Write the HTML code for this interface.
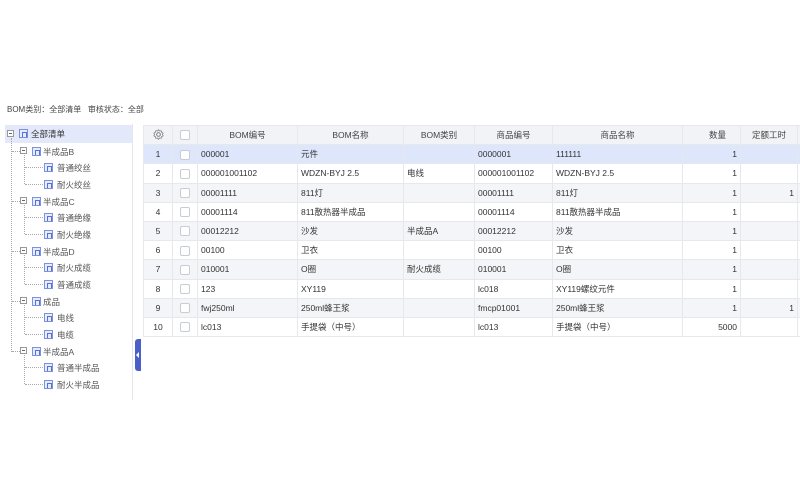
<!DOCTYPE html>
<html><head><meta charset="utf-8"><style>
*{margin:0;padding:0;box-sizing:border-box}
body{width:800px;height:500px;background:#fff;font-family:"Liberation Sans","Noto Sans CJK SC",sans-serif;font-size:8px;color:#333;position:relative;overflow:hidden}
.top{position:absolute;left:7px;top:104px;font-size:8px;color:#444}
.left{position:absolute;left:4px;top:124px;width:129px;height:276px;border-right:1px solid #e4e6ea}
.sel{position:absolute;left:1px;top:1px;width:127px;height:18px;background:#e3e9fa}
.n{position:absolute;height:12px;line-height:12px;font-size:8.5px;color:#555;white-space:nowrap}
.tg{position:absolute;width:7px;height:7px;border:1px solid #999;background:#fff}
.tg:after{content:"";position:absolute;left:1px;top:2px;width:3px;height:1px;background:#666}
.ic{position:absolute;width:9px;height:9px;border:1px solid #7c92e0;background:#e6ecfc}
.ic:after{content:"";position:absolute;left:2px;top:2px;width:3px;height:4px;border:1px solid #5570d8;border-bottom:none}
.vl{position:absolute;border-left:1px dotted #aaa}
.hl{position:absolute;border-top:1px dotted #aaa;width:6px}
#wrap{position:absolute;left:143px;top:125px;width:657px;height:260px;overflow:hidden}
table{width:677px;border-collapse:collapse;table-layout:fixed}
td,th{height:19.2px;border:1px solid #e6e8ec;font-weight:normal;font-size:8.5px;white-space:nowrap;overflow:hidden;padding:0 3px}
th{background:#f2f3f6;color:#444;text-align:center}
tr:nth-child(even) td{background:#f4f5f8}
tr.a td{background:#dde6fb!important}
td.c{text-align:center}td.r{text-align:right}
.cb{display:inline-block;width:10px;height:10px;border:1px solid #c8ccd4;border-radius:2px;background:#fff;vertical-align:middle}
.h{position:absolute;left:135px;top:339px;width:6px;height:32px;background:#4a5fc8;border-radius:3px 0 0 3px}
.h:after{content:"";position:absolute;left:1px;top:13px;border:3px solid transparent;border-right:3px solid #fff;border-left:0}
</style></head><body>
<div class="top">BOM类别：全部清单 &nbsp;&nbsp;审核状态：全部</div>
<div class="left"><div class="sel"></div>
<div class="vl" style="left:7px;top:14px;height:214px"></div>
<div class="tg" style="left:3px;top:6px"></div><div class="ic" style="left:15px;top:5px"></div><div class="n" style="left:27px;top:4px;color:#333">全部清单</div>
</div>
<div id="wrap"><div id="t"></div></div>
<script>
var L=document.querySelector('.left');var h='';
var g=[["半成品B",["普通绞丝","耐火绞丝"]],["半成品C",["普通绝缘","耐火绝缘"]],["半成品D",["耐火成缆","普通成缆"]],["成品",["电线","电缆"]],["半成品A",["普通半成品","耐火半成品"]]];
var y=21.7;
g.forEach(function(p){
h+='<div class="hl" style="left:8px;top:'+(y+5)+'px;width:8px"></div><div class="tg" style="left:16px;top:'+(y+1.5)+'px"></div><div class="ic" style="left:28px;top:'+(y+1)+'px"></div><div class="n" style="left:39px;top:'+y+'px">'+p[0]+'</div>';
h+='<div class="vl" style="left:20px;top:'+(y+9)+'px;height:29px"></div>';
var yy=y;
p[1].forEach(function(c){yy+=16.67;h+='<div class="hl" style="left:21px;top:'+(yy+5)+'px;width:18px"></div><div class="ic" style="left:40px;top:'+(yy+1)+'px"></div><div class="n" style="left:53px;top:'+yy+'px">'+c+'</div>';});
y=yy+16.67;});
L.innerHTML+=h;
var rows=[["000001","元件","","0000001","111111","1",""],["000001001102","WDZN-BYJ 2.5","电线","000001001102","WDZN-BYJ 2.5","1",""],["00001111","811灯","","00001111","811灯","1","1"],["00001114","811散热器半成品","","00001114","811散热器半成品","1",""],["00012212","沙发","半成品A","00012212","沙发","1",""],["00100","卫衣","","00100","卫衣","1",""],["010001","O圈","耐火成缆","010001","O圈","1",""],["123","XY119","","lc018","XY119螺纹元件","1",""],["fwj250ml","250ml蜂王浆","","fmcp01001","250ml蜂王浆","1","1"],["lc013","手提袋（中号）","","lc013","手提袋（中号）","5000",""]];
var t='<table><colgroup><col style="width:29px"><col style="width:25px"><col style="width:100px"><col style="width:106px"><col style="width:71px"><col style="width:78px"><col style="width:130px"><col style="width:58px"><col style="width:57px"><col style="width:23px"></colgroup><tr><th><svg width="11" height="11" viewBox="0 0 12 12"><circle cx="6" cy="6" r="2" fill="none" stroke="#777" stroke-width="1"/><path d="M6 .8l1.2 1.4 1.8-.3.4 1.8 1.7.8-.8 1.5.8 1.5-1.7.8-.4 1.8-1.8-.3L6 11.2 4.8 9.8 3 10.1 2.6 8.3.9 7.5 1.7 6 .9 4.5 2.6 3.7 3 1.9l1.8.3z" fill="none" stroke="#777" stroke-width=".8"/></svg></th><th><span class="cb"></span></th><th>BOM编号</th><th>BOM名称</th><th>BOM类别</th><th>商品编号</th><th>商品名称</th><th style="text-align:right;padding-right:14px">数量</th><th>定额工时</th><th></th></tr>';
rows.forEach(function(r,i){t+='<tr'+(i==0?' class="a"':'')+'><td class="c">'+(i+1)+'</td><td class="c"><span class="cb"></span></td><td>'+r[0]+'</td><td>'+r[1]+'</td><td>'+r[2]+'</td><td>'+r[3]+'</td><td>'+r[4]+'</td><td class="r">'+r[5]+'</td><td class="r">'+r[6]+'</td><td></td></tr>';});
t+='</table>';document.getElementById('t').outerHTML=t;
</script>
<div class="h"></div>
</body></html>
